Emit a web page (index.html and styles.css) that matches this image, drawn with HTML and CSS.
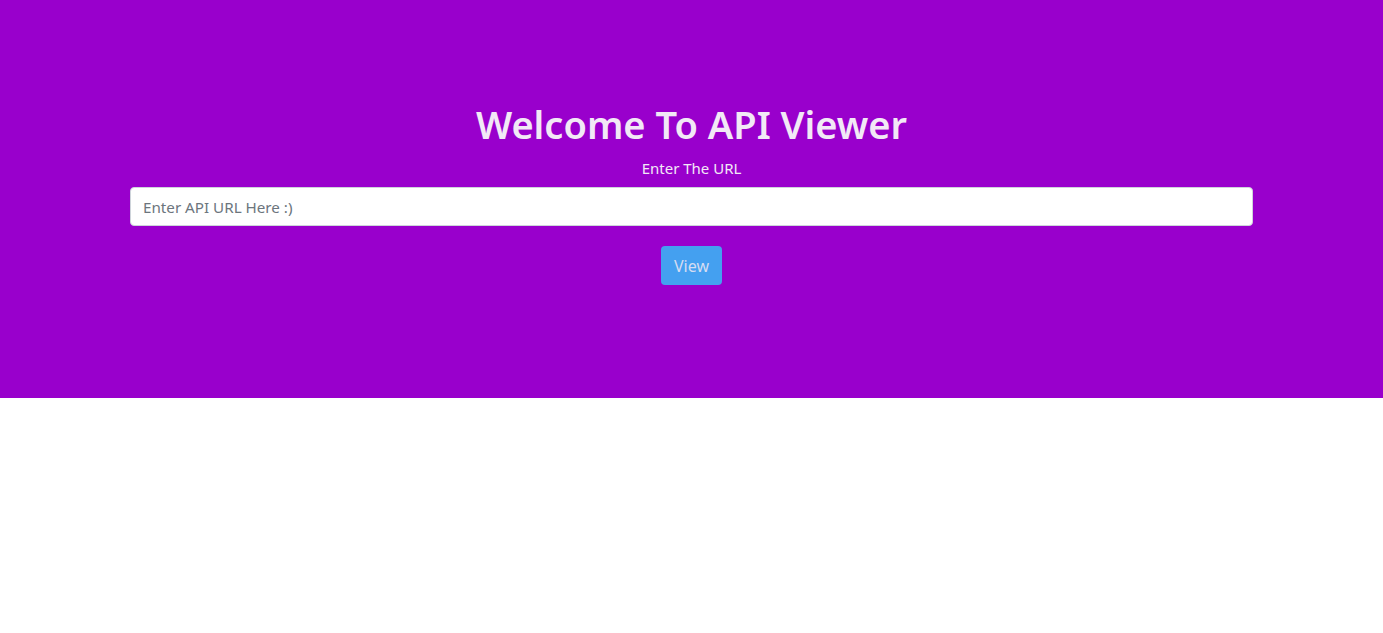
FILE: index.html
```html
<!DOCTYPE html>
<html lang="en">
<head>
<meta charset="utf-8">
<title>API Viewer</title>
<link rel="stylesheet" href="styles.css">
</head>
<body>
<header class="hero">
  <h1 class="hero-title">Welcome To API Viewer</h1>
  <label class="hero-label" for="url">Enter The URL</label>
  <input class="hero-input" id="url" type="text" placeholder="Enter API URL Here :)">
  <button class="hero-btn" type="button">View</button>
</header>
</body>
</html>
```

FILE: styles.css
```css
* { box-sizing: border-box; }
html, body { margin: 0; padding: 0; background: #fff; }
body {
  font-family: "Noto Sans", "Open Sans", "DejaVu Sans", sans-serif;
  font-size: 16px;
  line-height: 1.5;
}
.hero {
  height: 398px;
  background: #9900cc;
  box-shadow: 0 1px 0 #e3bdf0;
  display: flex;
  flex-direction: column;
  align-items: center;
  padding-top: 100px;
  color: #f2e9f6;
}
.hero-title {
  margin: 0 0 8px;
  font-size: 38px;
  font-weight: 600;
  line-height: 48px;
}
.hero-label {
  display: block;
  font-size: 15px;
  line-height: 24px;
  margin-bottom: 7px;
}
.hero-input {
  width: 1123px;
  height: 39px;
  padding: 6px 12px;
  font-family: inherit;
  font-size: 15.2px;
  color: #495057;
  background: #fff;
  border: 1px solid #ced4da;
  border-radius: 4px;
  outline: none;
}
.hero-input::placeholder { color: #6c757d; }
.hero-btn {
  margin-top: 20px;
  width: 61px;
  height: 39px;
  padding: 0;
  font-family: inherit;
  font-size: 16px;
  color: #d5dcf2;
  background: #44a0f0;
  border: none;
  border-radius: 4px;
}
```
